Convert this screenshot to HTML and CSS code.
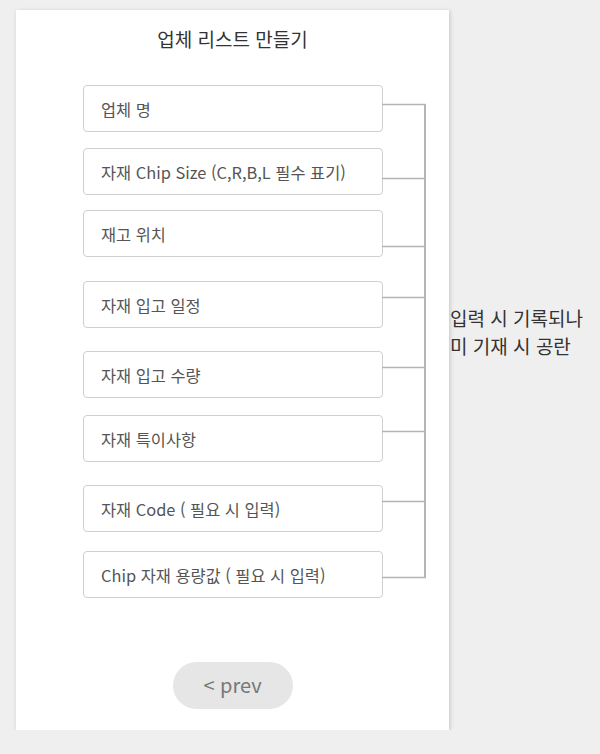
FILE: index.html
```html
<!DOCTYPE html>
<html lang="ko">
<head>
<meta charset="utf-8">
<link rel="stylesheet" href="styles.css">
</head>
<body>
<div class="page">
  <section class="card">
    <h1 class="title">업체 리스트 만들기</h1>
    <ul class="fields">
      <li class="field">업체 명</li>
      <li class="field">자재 Chip Size (C,R,B,L 필수 표기)</li>
      <li class="field">재고 위치</li>
      <li class="field">자재 입고 일정</li>
      <li class="field">자재 입고 수량</li>
      <li class="field">자재 특이사항</li>
      <li class="field">자재 Code ( 필요 시 입력)</li>
      <li class="field">Chip 자재 용량값 ( 필요 시 입력)</li>
    </ul>
    <svg class="bracket" width="433" height="720" viewBox="0 0 433 720" aria-hidden="true">
      <g stroke="#b4b4b4" stroke-width="1.5" fill="none">
        <path d="M366 94.5H409.5M366 168.5H409.5M366 236.5H409.5M366 287.5H409.5M366 357.5H409.5M366 421.5H409.5M366 491.5H409.5M366 567.5H409.5"/>
        <path d="M409 94V568" stroke-width="2"/>
      </g>
    </svg>
    <div class="actions">
      <button class="prev" type="button">&lt; prev</button>
    </div>
  </section>
  <p class="note">입력 시 기록되나<br>미 기재 시 공란</p>
</div>
</body>
</html>
```

FILE: styles.css
```css
* { box-sizing: border-box; }
html, body {
  margin: 0;
  padding: 0;
  background: #efefef;
  font-family: "Noto Sans CJK KR", "Noto Sans", sans-serif;
}
.page {
  display: flex;
  align-items: flex-start;
  padding: 10px 0 0 16px;
}
.card {
  position: relative;
  width: 433px;
  height: 720px;
  background: #fff;
  box-shadow: 1px 1px 4px rgba(0, 0, 0, 0.18);
  padding-top: 15px;
  display: flex;
  flex-direction: column;
}
.title {
  margin: 0;
  font-size: 19px;
  line-height: 28px;
  font-weight: 400;
  color: #333;
  text-align: center;
}
.fields {
  list-style: none;
  margin: 32px 0 0 67px;
  padding: 0;
  display: flex;
  flex-direction: column;
}
.field {
  width: 300px;
  height: 47px;
  border: 1px solid #cfcfcf;
  border-radius: 4px;
  padding-left: 17px;
  display: flex;
  align-items: center;
  font-size: 16.4px;
  color: #555;
}
.field:nth-child(2) { margin-top: 16px; }
.field:nth-child(3) { margin-top: 15px; }
.field:nth-child(4) { margin-top: 24px; }
.field:nth-child(5) { margin-top: 23px; }
.field:nth-child(6) { margin-top: 17px; }
.field:nth-child(7) { margin-top: 23px; }
.field:nth-child(8) { margin-top: 19px; }
.bracket {
  position: absolute;
  left: 0;
  top: 0;
}
.actions {
  display: flex;
  justify-content: center;
  margin-top: 64px;
}
.prev {
  width: 120px;
  height: 47px;
  border: none;
  border-radius: 24px;
  background: #e6e6e6;
  color: #777;
  font-family: "Noto Sans CJK KR", "Noto Sans", sans-serif;
  font-size: 20px;
  padding: 0 0 2px;
}
.note {
  margin: 294px 0 0 1px;
  font-size: 19px;
  line-height: 28px;
  color: #333;
}
```
